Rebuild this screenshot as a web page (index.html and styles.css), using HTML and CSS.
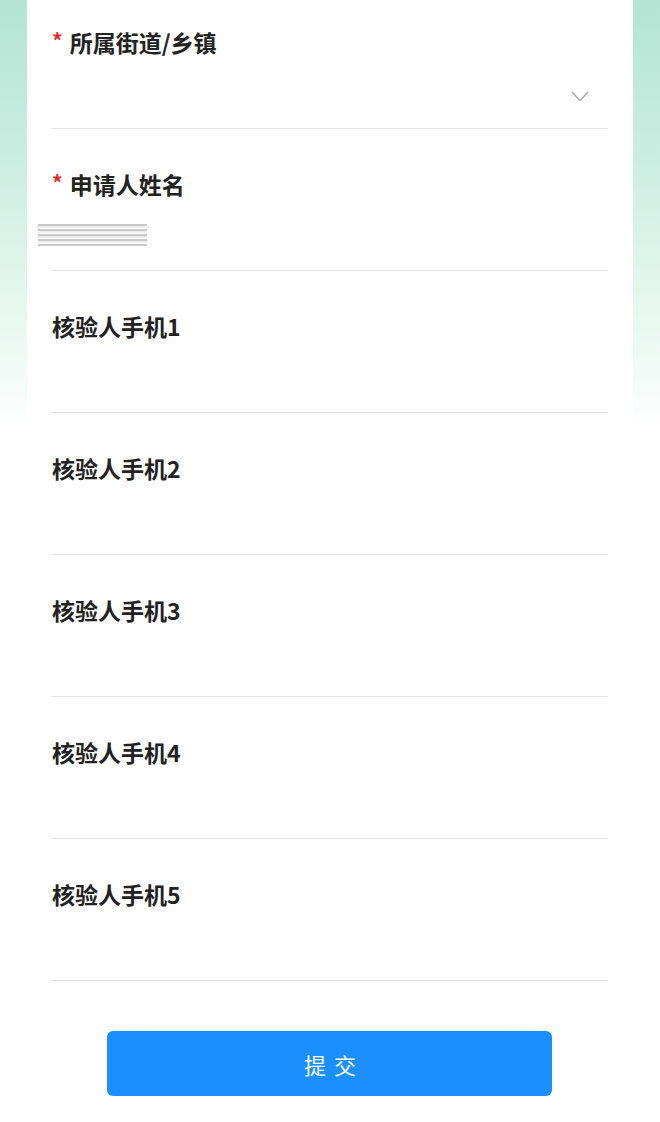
FILE: index.html
```html
<!DOCTYPE html>
<html lang="zh">
<head>
<meta charset="utf-8">
<link rel="stylesheet" href="styles.css">
</head>
<body>
<div class="page">
  <form class="card">
    <div class="field first">
      <div class="label"><span class="req">*</span>所属街道/乡镇</div>
      <div class="input select">
        <svg class="chevron" width="18" height="11" viewBox="0 0 18 11"><path d="M1 1 L9 9.5 L17 1" fill="none" stroke="#a6a6a6" stroke-width="1.4"/></svg>
      </div>
    </div>
    <div class="field">
      <div class="label"><span class="req">*</span>申请人姓名</div>
      <div class="input"><div class="blurred"></div></div>
    </div>
    <div class="field">
      <div class="label">核验人手机1</div>
      <div class="input"></div>
    </div>
    <div class="field">
      <div class="label">核验人手机2</div>
      <div class="input"></div>
    </div>
    <div class="field">
      <div class="label">核验人手机3</div>
      <div class="input"></div>
    </div>
    <div class="field">
      <div class="label">核验人手机4</div>
      <div class="input"></div>
    </div>
    <div class="field">
      <div class="label">核验人手机5</div>
      <div class="input"></div>
    </div>
    <div class="actions">
      <button type="button" class="submit">提交</button>
    </div>
  </form>
</div>
</body>
</html>
```

FILE: styles.css
```css
html, body {
  margin: 0;
  padding: 0;
}
body {
  font-family: "Noto Sans CJK SC", "Noto Sans", sans-serif;
  background: linear-gradient(180deg, #b3e4d4 0%, #cbede1 14%, #e3f6ee 26%, #f4fbf8 34%, #ffffff 38%, #ffffff 100%);
  min-height: 1122px;
}
.page {
  padding: 0 27px;
}
.card {
  background: #ffffff;
  padding: 0 25px 0 24px;
  min-height: 1122px;
  box-sizing: border-box;
  display: flex;
  flex-direction: column;
}
.field {
  padding-top: 41px;
  border-bottom: 1px solid #e4e4e4;
}
.field.first {
  padding-top: 28px;
}
.label {
  height: 28px;
  line-height: 28px;
  font-size: 23px;
  font-weight: 700;
  color: #222222;
  display: flex;
  align-items: center;
  padding-left: 1px;
}
.req {
  color: #e8262b;
  margin-right: 7px;
  font-size: 21px;
  position: relative;
  top: -2px;
}
.input {
  height: 72px;
  display: flex;
  align-items: center;
  position: relative;
}
.select {
  justify-content: flex-end;
}
.chevron {
  margin-right: 19px;
  margin-top: 9px;
}
.blurred {
  width: 109px;
  height: 22px;
  margin-left: -13px;
  margin-top: 2px;
  background: repeating-linear-gradient(180deg, #c4c4c4 0px, #c4c4c4 2px, #ececec 2px, #ececec 4px, #ffffff 4px, #ffffff 5px);
  filter: blur(0.6px);
  opacity: 0.9;
}
.actions {
  padding-top: 50px;
  display: flex;
  justify-content: center;
}
.submit {
  width: 445px;
  height: 65px;
  border: none;
  border-radius: 6px;
  background: #1a8ffd;
  color: #ffffff;
  font-family: "Noto Sans CJK SC", sans-serif;
  font-size: 22px;
  letter-spacing: 8px;
  padding-left: 16px;
  margin-left: -1px;
}
```
